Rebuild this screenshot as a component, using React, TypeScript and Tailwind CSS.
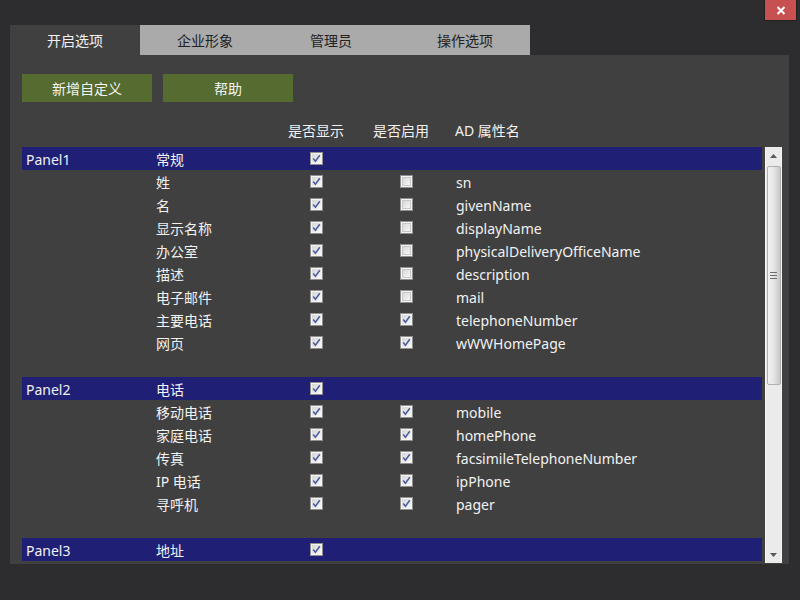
import React from 'react'

type Item = { name: string; show: boolean; enabled?: boolean; ad?: string }
type Group = { panel: string; title: string; items: Item[] }

const groups: Group[] = [
  {
    panel: 'Panel1',
    title: '常规',
    items: [
      { name: '姓', show: true, enabled: false, ad: 'sn' },
      { name: '名', show: true, enabled: false, ad: 'givenName' },
      { name: '显示名称', show: true, enabled: false, ad: 'displayName' },
      { name: '办公室', show: true, enabled: false, ad: 'physicalDeliveryOfficeName' },
      { name: '描述', show: true, enabled: false, ad: 'description' },
      { name: '电子邮件', show: true, enabled: false, ad: 'mail' },
      { name: '主要电话', show: true, enabled: true, ad: 'telephoneNumber' },
      { name: '网页', show: true, enabled: true, ad: 'wWWHomePage' },
    ],
  },
  {
    panel: 'Panel2',
    title: '电话',
    items: [
      { name: '移动电话', show: true, enabled: true, ad: 'mobile' },
      { name: '家庭电话', show: true, enabled: true, ad: 'homePhone' },
      { name: '传真', show: true, enabled: true, ad: 'facsimileTelephoneNumber' },
      { name: 'IP 电话', show: true, enabled: true, ad: 'ipPhone' },
      { name: '寻呼机', show: true, enabled: true, ad: 'pager' },
    ],
  },
  { panel: 'Panel3', title: '地址', items: [] },
]

const font = { fontFamily: '"Noto Sans", "Noto Sans CJK SC", sans-serif' }

function CheckBox({ checked }: { checked: boolean }) {
  return (
    <div className="w-[13px] h-[13px] border border-[#8f8f8f] bg-[#f4f4f4] p-px">
      <div
        className={
          checked
            ? 'w-full h-full bg-gradient-to-br from-[#d6d6d6] to-[#f8f8f8] flex items-center justify-center'
            : 'w-full h-full border border-[#c8c8c8] bg-gradient-to-br from-[#d8d8d8] to-[#f6f6f6]'
        }
      >
        {checked && (
          <svg width="9" height="9" viewBox="0 0 9 9">
            <path d="M1.2 4.6 L3.4 7.2 L7.8 1.2" fill="none" stroke="#4a5aa0" strokeWidth="1.5" />
          </svg>
        )}
      </div>
    </div>
  )
}

function ScrollBar() {
  return (
    <div className="w-[17px] h-[416px] ml-[3px] bg-[#ebebeb] border-x border-[#f6f6f6] flex flex-col items-center">
      <div className="h-[17px] w-full flex items-center justify-center">
        <svg width="7" height="4" viewBox="0 0 7 4">
          <path d="M0 4 L3.5 0 L7 4 Z" fill="#5a5a5a" />
        </svg>
      </div>
      <div className="mt-[2px] w-[14px] h-[219px] rounded-[2px] border border-[#b0b0b0] bg-gradient-to-r from-[#f2f2f2] via-[#e4e4e4] to-[#c8c8c8] flex items-center justify-center">
        <div className="flex flex-col gap-[2px]">
          <div className="w-[7px] h-px bg-[#707070]" />
          <div className="w-[7px] h-px bg-[#707070]" />
          <div className="w-[7px] h-px bg-[#707070]" />
        </div>
      </div>
      <div className="flex-1" />
      <div className="h-[17px] w-full flex items-center justify-center">
        <svg width="7" height="4" viewBox="0 0 7 4">
          <path d="M0 0 L7 0 L3.5 4 Z" fill="#5a5a5a" />
        </svg>
      </div>
    </div>
  )
}

export default function App() {
  const tabs = ['开启选项', '企业形象', '管理员', '操作选项']

  return (
    <div className="w-[800px] h-[600px] bg-[#2d2d2f] relative overflow-hidden text-[14px]" style={font}>
      <div className="absolute top-0 left-[764px] w-[33px] h-[21px] bg-[#c75050] border-x border-b border-[#202020] flex items-center justify-center">
        <svg width="10" height="9" viewBox="0 0 10 9">
          <path d="M1.5 1 L8.5 8 M8.5 1 L1.5 8" stroke="#ffffff" strokeWidth="2" />
        </svg>
      </div>

      <div className="pt-[25px] pl-[10px]">
        <div className="flex h-[30px]">
          {tabs.map((t, i) => (
            <div
              key={t}
              className={
                i === 0
                  ? 'w-[130px] pt-px bg-[#404040] text-[#f2f2f2] flex items-center justify-center'
                  : i === 2
                    ? 'w-[130px] pt-px pr-[8px] bg-[#aaaaaa] text-[#222222] flex items-center justify-center'
                    : 'w-[130px] pt-px bg-[#aaaaaa] text-[#222222] flex items-center justify-center'
              }
            >
              {t}
            </div>
          ))}
        </div>

        <div className="w-[779px] h-[509px] bg-[#404040] pt-[19px] pl-[12px]">
          <div className="flex gap-[11px]">
            <button className="w-[130px] h-[28px] pt-px bg-[#556b2f] text-[#f4f4f4]">新增自定义</button>
            <button className="w-[130px] h-[28px] pt-px bg-[#556b2f] text-[#f4f4f4]">帮助</button>
          </div>

          <div className="flex h-[20px] mt-[18px] items-center text-[#f2f2f2]">
            <div className="w-[266px]" />
            <div className="w-[85px]">是否显示</div>
            <div className="w-[82px]">是否启用</div>
            <div>AD 属性名</div>
          </div>

          <div className="flex mt-[7px]">
            <div className="w-[740px] h-[416px] overflow-hidden text-[#f2f2f2]">
              {groups.map((g) => (
                <div key={g.panel}>
                  <div className="flex h-[23px] items-center bg-[#1f1f75]">
                    <div className="w-[134px] pl-[4px] pt-[2px]">{g.panel}</div>
                    <div className="w-[154px] pt-[2px]">{g.title}</div>
                    <CheckBox checked />
                  </div>
                  {g.items.map((it) => (
                    <div key={it.name} className="flex h-[23px] items-center">
                      <div className="w-[134px]" />
                      <div className="w-[154px] pt-[2px]">{it.name}</div>
                      <div className="w-[90px]">
                        <CheckBox checked={it.show} />
                      </div>
                      <div className="w-[56px]">
                        <CheckBox checked={!!it.enabled} />
                      </div>
                      <div className="pt-[2px]">{it.ad}</div>
                    </div>
                  ))}
                  <div className="h-[23px]" />
                </div>
              ))}
            </div>
            <ScrollBar />
          </div>
        </div>
      </div>
    </div>
  )
}
